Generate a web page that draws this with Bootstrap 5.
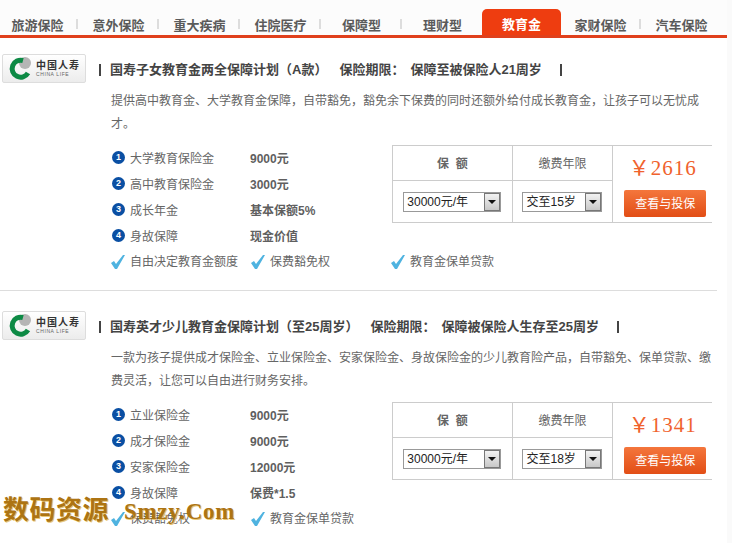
<!DOCTYPE html>
<html lang="zh-CN">
  <head>
    <meta charset="UTF-8" />
    <meta name="viewport" content="width=device-width, initial-scale=1.0" />
    <title>教育金保险</title>
    <link
      href="https://cdn.jsdelivr.net/npm/bootstrap@5.3.2/dist/css/bootstrap.min.css"
      rel="stylesheet"
    />
    <style>
      body {
        background: #fafafa;
        font-family: "Liberation Sans", "Noto Sans CJK SC", sans-serif;
        font-size: 12px;
        color: #666;
        height: 543px;
        overflow: hidden;
      }
      .page-wrap {
        width: 727px;
        height: 543px;
        background: #fff;
        position: relative;
        overflow: hidden;
      }
      .tab-bar {
        height: 38px;
        border-bottom: 3px solid #e0401c;
        background: #fcfcfc;
      }
      .tab-item {
        width: 81px;
        height: 35px;
        padding-top: 13px;
        line-height: 26px;
        font-size: 13px;
        font-weight: 700;
        color: #5a5a5a;
        text-align: center;
        position: relative;
      }
      .tab-first {
        margin-left: -3px;
      }
      .tab-item.has-sep::after {
        content: "";
        position: absolute;
        right: 0;
        top: 19px;
        width: 2px;
        height: 10px;
        background: #ddd;
      }
      .tab-active {
        width: 79px;
        height: 26px;
        margin: 9px 0 0 -1px;
        padding-top: 3px;
        background: #ee3d10;
        color: #fff;
        border-radius: 5px 5px 0 0;
      }
      .tab-after {
        margin-left: -1px;
      }
      .plan-block {
        padding: 16px 0 15px 2px;
        width: 717px;
        border-bottom: 1px solid #ddd;
        margin-bottom: 4px;
      }
      .plan-block:last-of-type {
        border-bottom: 0;
      }
      .logo-box {
        width: 84px;
        height: 29px;
        flex: none;
        border: 1px solid #ddd;
        border-radius: 2px;
        background: linear-gradient(#fff, #ececec);
        padding-left: 5px;
        gap: 2px;
      }
      .logo-cn {
        font-size: 10px;
        line-height: 11px;
        font-weight: 700;
        color: #333;
        letter-spacing: 1px;
        white-space: nowrap;
      }
      .logo-en {
        font-size: 5px;
        line-height: 6px;
        color: #666;
        letter-spacing: 0.6px;
        white-space: nowrap;
      }
      .plan-body {
        padding: 4px 0 0 13px;
      }
      .plan-title {
        height: 24px;
        line-height: 24px;
        font-size: 13px;
        font-weight: 700;
        color: #444;
        white-space: nowrap;
      }
      .title-rule {
        width: 2px;
        height: 12px;
        background: #444;
      }
      .title-name {
        margin: 0 12px 0 9px;
      }
      .title-term-value {
        margin-left: 6px;
      }
      .title-rule-end {
        margin-left: 18px;
      }
      .plan-desc {
        width: 602px;
        margin: 8px 0 0 12px;
        line-height: 23px;
        color: #666;
      }
      .plan-detail {
        margin: 9px 0 0 12px;
      }
      .item-list {
        width: 281px;
      }
      .item-row {
        height: 26px;
        line-height: 26px;
      }
      .item-row > span {
        position: relative;
        top: 1px;
      }
      .item-row > .num-dot {
        top: -1px;
      }
      .num-dot {
        width: 13px;
        height: 13px;
        border-radius: 50%;
        background: #0a4fa3;
        color: #fff;
        font-size: 9px;
        line-height: 13px;
        font-weight: 700;
        text-align: center;
        margin: 0 5px 0 1px;
      }
      .item-label {
        width: 120px;
      }
      .item-value {
        font-weight: 700;
        color: #5f5f5f;
      }
      .quote-grid {
        width: 320px;
        height: 78px;
        border-top: 1px solid #ccc;
        border-bottom: 1px solid #ccc;
        border-left: 1px solid #ccc;
      }
      .quote-col {
        border-right: 1px solid #ccc;
      }
      .quote-col-a {
        width: 120px;
      }
      .quote-col-b {
        width: 101px;
      }
      .quote-head {
        height: 35px;
        line-height: 36px;
        text-align: center;
        border-bottom: 1px solid #ccc;
      }
      .quote-head-bold {
        font-weight: 700;
      }
      .quote-cell {
        height: 41px;
      }
      .select-wrap {
        position: relative;
        height: 20px;
      }
      .select-wrap select {
        appearance: none;
        display: block;
        width: 100%;
        height: 20px;
        border: 1px solid #999;
        border-radius: 0;
        padding: 0 0 0 3px;
        background: #fff;
        font-family: inherit;
        font-size: 12px;
        color: #222;
      }
      .select-arrow {
        position: absolute;
        right: 1px;
        top: 1px;
        width: 16px;
        height: 18px;
        background: linear-gradient(#f2f2f2, #c8c8c8);
        border: 1px solid #777;
      }
      .select-arrow::after {
        content: "";
        position: absolute;
        left: 3px;
        top: 6px;
        border-left: 4px solid transparent;
        border-right: 4px solid transparent;
        border-top: 4px solid #111;
      }
      .select-money {
        width: 98px;
      }
      .select-age {
        width: 80px;
      }
      .price-col {
        width: 99px;
      }
      .price-text {
        font-family: "Liberation Serif", "Noto Sans CJK SC", serif;
        font-size: 21px;
        line-height: 24px;
        color: #f0622d;
        margin-top: 10px;
        letter-spacing: 1px;
        text-align: center;
      }
      .buy-btn {
        width: 82px;
        height: 27px;
        margin: 10px 0 0 11px;
        padding: 0;
        border: 0;
        border-radius: 2px;
        background: linear-gradient(#f4763c, #e24e16);
        color: #fff;
        font-size: 12px;
      }
      .perk-row {
        height: 26px;
        line-height: 28px;
      }
      .perk-item {
        width: 140px;
      }
      .perk-item svg {
        margin-right: 4px;
        flex: none;
      }
      .watermark {
        position: absolute;
        left: 3px;
        top: 496px;
        font-family: "Liberation Serif", "Noto Sans CJK SC", serif;
        font-size: 26px;
        line-height: 30px;
        font-weight: 700;
        color: #ad7413;
        letter-spacing: 0.5px;
        white-space: nowrap;
        text-shadow: 1px 1px 0 #e8c878;
      }
      .watermark-en {
        margin-left: 15px;
        font-size: 23px;
        letter-spacing: 0.7px;
      }
    </style>
  </head>
  <body>
    <div class="page-wrap">
      <!-- Tabs -->
      <div class="tab-bar d-flex">
        <div class="tab-item tab-first has-sep">旅游保险</div>
        <div class="tab-item has-sep">意外保险</div>
        <div class="tab-item has-sep">重大疾病</div>
        <div class="tab-item has-sep">住院医疗</div>
        <div class="tab-item has-sep">保障型</div>
        <div class="tab-item">理财型</div>
        <div class="tab-item tab-active">教育金</div>
        <div class="tab-item has-sep tab-after">家财保险</div>
        <div class="tab-item">汽车保险</div>
      </div>

      <!-- Plan 1 -->
      <div class="plan-block d-flex">
        <div class="logo-box d-flex align-items-center">
          <svg width="26" height="25" viewBox="0 0 26 25">
            <circle cx="17" cy="7" r="6" fill="#b5b5b5" />
            <path d="M15 4.5A8.5 8.5 0 1 0 20 17" fill="none" stroke="#0d8a45" stroke-width="5" />
          </svg>
          <div>
            <div class="logo-cn">中国人寿</div>
            <div class="logo-en">CHINA LIFE</div>
          </div>
        </div>
        <div class="plan-body">
          <div class="plan-title d-flex align-items-center">
            <span class="title-rule"></span>
            <span class="title-name">国寿子女教育金两全保障计划（A款）</span>
            <span>保险期限：<span class="title-term-value">保障至被保险人21周岁</span></span>
            <span class="title-rule title-rule-end"></span>
          </div>
          <div class="plan-desc">提供高中教育金、大学教育金保障，自带豁免，豁免余下保费的同时还额外给付成长教育金，让孩子可以无忧成才。</div>
          <div class="plan-detail">
            <div class="d-flex">
              <div class="item-list">
                <div class="item-row d-flex align-items-center"><span class="num-dot">1</span><span class="item-label">大学教育保险金</span><span class="item-value">9000元</span></div>
                <div class="item-row d-flex align-items-center"><span class="num-dot">2</span><span class="item-label">高中教育保险金</span><span class="item-value">3000元</span></div>
                <div class="item-row d-flex align-items-center"><span class="num-dot">3</span><span class="item-label">成长年金</span><span class="item-value">基本保额5%</span></div>
                <div class="item-row d-flex align-items-center"><span class="num-dot">4</span><span class="item-label">身故保障</span><span class="item-value">现金价值</span></div>
              </div>
              <div class="quote-grid d-flex">
                <div class="quote-col quote-col-a">
                  <div class="quote-head quote-head-bold">保&nbsp;&nbsp;额</div>
                  <div class="quote-cell d-flex align-items-center justify-content-center">
                    <div class="select-wrap select-money"><select><option>30000元/年</option></select><span class="select-arrow"></span></div>
                  </div>
                </div>
                <div class="quote-col quote-col-b">
                  <div class="quote-head">缴费年限</div>
                  <div class="quote-cell d-flex align-items-center justify-content-center">
                    <div class="select-wrap select-age"><select><option>交至15岁</option></select><span class="select-arrow"></span></div>
                  </div>
                </div>
                <div class="price-col">
                  <div class="price-text">￥2616</div>
                  <button class="buy-btn" type="button">查看与投保</button>
                </div>
              </div>
            </div>
            <div class="perk-row d-flex">
              <div class="perk-item d-flex align-items-center"><svg width="15" height="14" viewBox="0 0 15 14"><path d="M0 8l3-2 2 3 7-9h2L6 14H4z" fill="#4fb3e0" /></svg>自由决定教育金额度</div>
              <div class="perk-item d-flex align-items-center"><svg width="15" height="14" viewBox="0 0 15 14"><path d="M0 8l3-2 2 3 7-9h2L6 14H4z" fill="#4fb3e0" /></svg>保费豁免权</div>
              <div class="perk-item d-flex align-items-center"><svg width="15" height="14" viewBox="0 0 15 14"><path d="M0 8l3-2 2 3 7-9h2L6 14H4z" fill="#4fb3e0" /></svg>教育金保单贷款</div>
            </div>
          </div>
        </div>
      </div>

      <!-- Plan 2 -->
      <div class="plan-block d-flex">
        <div class="logo-box d-flex align-items-center">
          <svg width="26" height="25" viewBox="0 0 26 25">
            <circle cx="17" cy="7" r="6" fill="#b5b5b5" />
            <path d="M15 4.5A8.5 8.5 0 1 0 20 17" fill="none" stroke="#0d8a45" stroke-width="5" />
          </svg>
          <div>
            <div class="logo-cn">中国人寿</div>
            <div class="logo-en">CHINA LIFE</div>
          </div>
        </div>
        <div class="plan-body">
          <div class="plan-title d-flex align-items-center">
            <span class="title-rule"></span>
            <span class="title-name">国寿英才少儿教育金保障计划（至25周岁）</span>
            <span>保险期限：<span class="title-term-value">保障被保险人生存至25周岁</span></span>
            <span class="title-rule title-rule-end"></span>
          </div>
          <div class="plan-desc">一款为孩子提供成才保险金、立业保险金、安家保险金、身故保险金的少儿教育险产品，自带豁免、保单贷款、缴费灵活，让您可以自由进行财务安排。</div>
          <div class="plan-detail">
            <div class="d-flex">
              <div class="item-list">
                <div class="item-row d-flex align-items-center"><span class="num-dot">1</span><span class="item-label">立业保险金</span><span class="item-value">9000元</span></div>
                <div class="item-row d-flex align-items-center"><span class="num-dot">2</span><span class="item-label">成才保险金</span><span class="item-value">9000元</span></div>
                <div class="item-row d-flex align-items-center"><span class="num-dot">3</span><span class="item-label">安家保险金</span><span class="item-value">12000元</span></div>
                <div class="item-row d-flex align-items-center"><span class="num-dot">4</span><span class="item-label">身故保障</span><span class="item-value">保费*1.5</span></div>
              </div>
              <div class="quote-grid d-flex">
                <div class="quote-col quote-col-a">
                  <div class="quote-head quote-head-bold">保&nbsp;&nbsp;额</div>
                  <div class="quote-cell d-flex align-items-center justify-content-center">
                    <div class="select-wrap select-money"><select><option>30000元/年</option></select><span class="select-arrow"></span></div>
                  </div>
                </div>
                <div class="quote-col quote-col-b">
                  <div class="quote-head">缴费年限</div>
                  <div class="quote-cell d-flex align-items-center justify-content-center">
                    <div class="select-wrap select-age"><select><option>交至18岁</option></select><span class="select-arrow"></span></div>
                  </div>
                </div>
                <div class="price-col">
                  <div class="price-text">￥1341</div>
                  <button class="buy-btn" type="button">查看与投保</button>
                </div>
              </div>
            </div>
            <div class="perk-row d-flex">
              <div class="perk-item d-flex align-items-center"><svg width="15" height="14" viewBox="0 0 15 14"><path d="M0 8l3-2 2 3 7-9h2L6 14H4z" fill="#4fb3e0" /></svg>保费豁免权</div>
              <div class="perk-item d-flex align-items-center"><svg width="15" height="14" viewBox="0 0 15 14"><path d="M0 8l3-2 2 3 7-9h2L6 14H4z" fill="#4fb3e0" /></svg>教育金保单贷款</div>
            </div>
          </div>
        </div>
      </div>

      <!-- Site watermark -->
      <div class="watermark">数码资源<span class="watermark-en">Smzy.Com</span></div>
    </div>
    <script src="https://cdn.jsdelivr.net/npm/bootstrap@5.3.2/dist/js/bootstrap.bundle.min.js"></script>
  </body>
</html>
